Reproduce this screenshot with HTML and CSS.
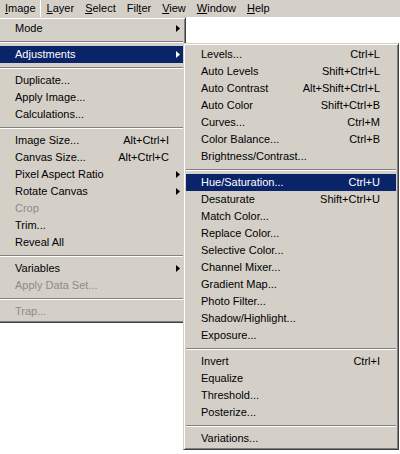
FILE: index.html
```html
<!DOCTYPE html>
<html lang="en">
<head>
  <meta charset="UTF-8">
  <title>Image menu</title>
  <link rel="stylesheet" href="styles.css">
</head>
<body>
  <div class="menubar">
    <span class="top open"><u>I</u>mage</span>
    <span class="top"><u>L</u>ayer</span>
    <span class="top"><u>S</u>elect</span>
    <span class="top">Fil<u>t</u>er</span>
    <span class="top"><u>V</u>iew</span>
    <span class="top"><u>W</u>indow</span>
    <span class="top"><u>H</u>elp</span>
  </div>

  <div class="menus">
    <div class="menu main">
      <div class="item"><span>Mode</span><span></span><span class="more"><svg width="4" height="7" viewBox="0 0 4 7"><polygon points="0,0 4,3.5 0,7"/></svg></span></div>
      <div class="sep"></div>
      <div class="item active"><span>Adjustments</span><span></span><span class="more"><svg width="4" height="7" viewBox="0 0 4 7"><polygon points="0,0 4,3.5 0,7"/></svg></span></div>
      <div class="sep"></div>
      <div class="item"><span>Duplicate...</span></div>
      <div class="item"><span>Apply Image...</span></div>
      <div class="item"><span>Calculations...</span></div>
      <div class="sep"></div>
      <div class="item"><span>Image Size...</span><span class="key">Alt+Ctrl+I</span></div>
      <div class="item"><span>Canvas Size...</span><span class="key">Alt+Ctrl+C</span></div>
      <div class="item"><span>Pixel Aspect Ratio</span><span></span><span class="more"><svg width="4" height="7" viewBox="0 0 4 7"><polygon points="0,0 4,3.5 0,7"/></svg></span></div>
      <div class="item"><span>Rotate Canvas</span><span></span><span class="more"><svg width="4" height="7" viewBox="0 0 4 7"><polygon points="0,0 4,3.5 0,7"/></svg></span></div>
      <div class="item off"><span>Crop</span></div>
      <div class="item"><span>Trim...</span></div>
      <div class="item"><span>Reveal All</span></div>
      <div class="sep"></div>
      <div class="item"><span>Variables</span><span></span><span class="more"><svg width="4" height="7" viewBox="0 0 4 7"><polygon points="0,0 4,3.5 0,7"/></svg></span></div>
      <div class="item off"><span>Apply Data Set...</span></div>
      <div class="sep"></div>
      <div class="item off"><span>Trap...</span></div>
    </div>

    <div class="menu sub">
      <div class="item"><span>Levels...</span><span class="key">Ctrl+L</span></div>
      <div class="item"><span>Auto Levels</span><span class="key">Shift+Ctrl+L</span></div>
      <div class="item"><span>Auto Contrast</span><span class="key">Alt+Shift+Ctrl+L</span></div>
      <div class="item"><span>Auto Color</span><span class="key">Shift+Ctrl+B</span></div>
      <div class="item"><span>Curves...</span><span class="key">Ctrl+M</span></div>
      <div class="item"><span>Color Balance...</span><span class="key">Ctrl+B</span></div>
      <div class="item"><span>Brightness/Contrast...</span></div>
      <div class="sep"></div>
      <div class="item active"><span>Hue/Saturation...</span><span class="key">Ctrl+U</span></div>
      <div class="item"><span>Desaturate</span><span class="key">Shift+Ctrl+U</span></div>
      <div class="item"><span>Match Color...</span></div>
      <div class="item"><span>Replace Color...</span></div>
      <div class="item"><span>Selective Color...</span></div>
      <div class="item"><span>Channel Mixer...</span></div>
      <div class="item"><span>Gradient Map...</span></div>
      <div class="item"><span>Photo Filter...</span></div>
      <div class="item"><span>Shadow/Highlight...</span></div>
      <div class="item"><span>Exposure...</span></div>
      <div class="sep"></div>
      <div class="item"><span>Invert</span><span class="key">Ctrl+I</span></div>
      <div class="item"><span>Equalize</span></div>
      <div class="item"><span>Threshold...</span></div>
      <div class="item"><span>Posterize...</span></div>
      <div class="sep"></div>
      <div class="item"><span>Variations...</span></div>
    </div>
  </div>
</body>
</html>
```

FILE: styles.css
```css
body {
  margin: 0;
  background: #ffffff;
  color: #000000;
  font: 11px "Liberation Sans", Arial, sans-serif;
}

.menubar {
  display: flex;
  gap: 1px;
  height: 17px;
  background: #d4d0c8;
}

.top {
  padding: 0 5px;
  line-height: 17px;
}

.top u {
  text-underline-offset: 1px;
}

.top.open {
  box-shadow: inset -1px 0 #ffffff;
}

.menus {
  display: flex;
  align-items: flex-start;
}

.menu {
  background: #d4d0c8;
  border: 1px solid;
  border-color: #d4d0c8 #404040 #404040 #d4d0c8;
  box-shadow: inset 1px 1px #ffffff, inset -1px -1px #808080;
  padding: 2px;
}

.main {
  width: 183px;
  margin-left: -3px;
}

.sub {
  position: relative;
  z-index: 1;
  width: 210px;
  margin-top: 26px;
  margin-left: -3px;
}

.item {
  display: grid;
  grid-template-columns: 1fr auto 14px;
  height: 17px;
  line-height: 17px;
  padding-left: 15px;
  white-space: nowrap;
}

.sub .item {
  grid-template-columns: 1fr auto 16px;
}

.key {
  text-align: right;
}

.more {
  display: flex;
  align-items: center;
  justify-content: flex-end;
  padding-right: 3px;
}

.more svg {
  fill: currentColor;
}

.item.active {
  background: #0a246a;
  color: #ffffff;
}

.item.off {
  color: #8d8b87;
}

.sep {
  margin: 4px 0 3px;
  border-top: 1px solid #808080;
  border-bottom: 1px solid #ffffff;
}
```
